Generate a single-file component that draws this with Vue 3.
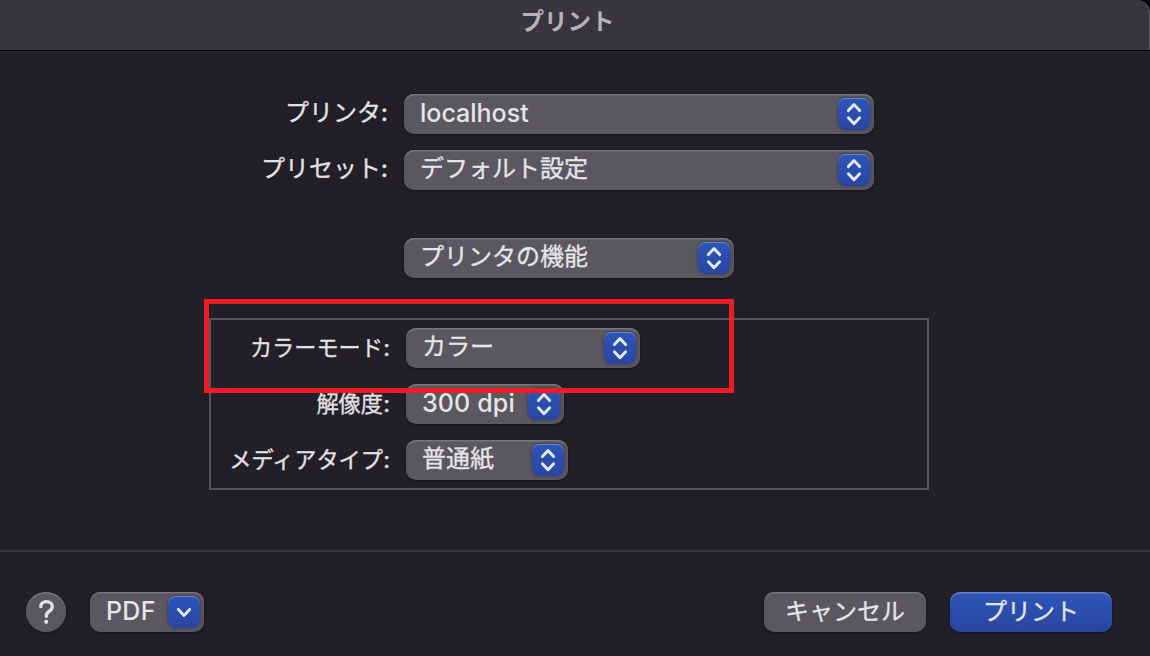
<script setup>
const topRows = [
  { label: 'プリンタ', value: 'localhost', width: 470, latin: 'host' },
  { label: 'プリセット', value: 'デフォルト設定', width: 470 },
  { label: '', value: 'プリンタの機能', width: 330, section: true },
]
const featureRows = [
  { label: 'カラーモード', value: 'カラー', width: 234 },
  { label: '解像度', value: '300 dpi', width: 158, latin: 'dpi' },
  { label: 'メディアタイプ', value: '普通紙', width: 162 },
]
</script>

<template>
  <div class="backdrop">
    <main class="dialog">
      <header class="titlebar"><span>プリント</span></header>
      <section class="content">
        <div v-for="row in topRows" :key="row.value" class="row" :class="{ section: row.section }">
          <div class="label"><template v-if="row.label"><span>{{ row.label }}</span><span class="colon">:</span></template></div>
          <div class="control popup" :style="{ width: row.width + 'px' }">
            <span class="value" :class="row.latin">{{ row.value }}</span>
            <span class="stepper">
              <svg width="32" height="32" viewBox="0 0 32 32"><path d="M10.4 12.6 16 6.6l5.6 6M10.4 19.8l5.6 6 5.6-6" /></svg>
            </span>
          </div>
        </div>
        <div class="group">
          <div v-for="row in featureRows" :key="row.label" class="row small">
            <div class="label"><span>{{ row.label }}</span><span class="colon">:</span></div>
            <div class="control popup" :style="{ width: row.width + 'px' }">
              <span class="value" :class="row.latin">{{ row.value }}</span>
              <span class="stepper">
                <svg width="32" height="32" viewBox="0 0 32 32"><path d="M10.4 12.6 16 6.6l5.6 6M10.4 19.8l5.6 6 5.6-6" /></svg>
              </span>
            </div>
          </div>
          <div class="highlight"></div>
        </div>
      </section>
      <footer class="footer">
        <button class="control help" aria-label="ヘルプ">
          <svg width="40" height="40" viewBox="0 0 40 40"><path d="M14.8 14.6C15 11.2 17.2 9.6 20.4 9.6c3.4 0 5.9 2 5.9 5 0 2.4-1.3 3.6-3.3 4.9-1.9 1.2-2.6 2.3-2.6 4.2v.6" /><circle cx="20.2" cy="29.8" r="2.1" /></svg>
        </button>
        <div class="control popup pdf">
          <span class="value pdftext">PDF</span>
          <span class="stepper">
            <svg width="32" height="32" viewBox="0 0 32 32"><path d="M10.4 13.4 16 19.4l5.6-6" /></svg>
          </span>
        </div>
        <button class="control action cancel"><span>キャンセル</span></button>
        <button class="control action primary"><span>プリント</span></button>
      </footer>
    </main>
  </div>
</template>

<style>
body { margin: 0; overflow: hidden; background: #000; }
</style>

<style scoped>
.backdrop {
  width: 1150px;
  height: 656px;
  background: #08070a;
}
.dialog {
  box-sizing: border-box;
  width: 1150px;
  height: 656px;
  display: flex;
  flex-direction: column;
  overflow: hidden;
  border-top-right-radius: 13px;
  background: #221f29;
  color: #e3e2e4;
  font: 24px/40px Inter, "Noto Sans CJK JP", sans-serif;
  -webkit-text-stroke: 0.3px currentColor;
}
.titlebar {
  box-sizing: border-box;
  flex: none;
  height: 51px;
  border-bottom: 1px solid #000;
  border-top-right-radius: 13px;
  background: #38353f;
  box-shadow: inset -1px 0 0 #65626b;
  color: #b5b2ba;
  text-align: center;
  font-size: 23.5px;
  font-weight: 700;
  line-height: 43px;
  padding-right: 15px;
  -webkit-text-stroke: 0;
}
.content {
  flex: none;
  box-sizing: border-box;
  height: 499px;
  padding-top: 43px;
}
.row {
  display: flex;
  height: 40px;
  margin-bottom: 16px;
}
.row.section { margin: 48px 0 40px; }
.label {
  width: 388px;
  margin-right: 16px;
  display: flex;
  justify-content: flex-end;
  line-height: 38px;
  white-space: nowrap;
}
.colon {
  width: 7px;
  display: flex;
  justify-content: center;
  font-weight: 500;
}
.control {
  box-sizing: border-box;
  height: 40px;
  border: 0;
  border-radius: 10px;
  background: #5a5760;
  box-shadow: inset 0 1.5px 0 #77747c, 0 1px 2px #141218;
  color: #e6e5e8;
}
.popup {
  display: flex;
  justify-content: space-between;
  align-items: flex-start;
  padding: 4px 4px 4px 16px;
}
.value {
  line-height: 40px;
  margin-top: -5px;
  white-space: nowrap;
}
.host, .dpi, .pdftext {
  font-size: 25px;
  font-weight: 500;
  -webkit-text-stroke: 0;
}
.dpi { letter-spacing: 0.15px; }
.pdftext { font-weight: 450; letter-spacing: 0.3px; }
.stepper {
  flex: none;
  width: 32px;
  height: 32px;
  border-radius: 8px;
  background: linear-gradient(#2d55b9, #2846a0);
  box-shadow: inset 0 1px 0 #6582c9, 0 0 3px #34313b;
}
svg { display: block; }
path {
  fill: none;
  stroke: #e3e8f5;
  stroke-width: 2.9;
  stroke-linecap: round;
  stroke-linejoin: round;
}
.group {
  position: relative;
  box-sizing: border-box;
  width: 720px;
  height: 172px;
  margin-left: 209px;
  padding-top: 8px;
  border: 2px solid #56535d;
}
.small .label {
  width: 179px;
  margin-right: 16px;
  font-size: 22.2px;
  line-height: 39px;
}
.highlight {
  position: absolute;
  box-sizing: border-box;
  left: -7px;
  top: -21px;
  width: 530px;
  height: 94px;
  border: 5px solid #ee1c23;
}
.footer {
  box-sizing: border-box;
  flex: 1;
  display: flex;
  border-top: 2px solid #38353f;
  padding: 40px 38px 0 26px;
}
.help {
  width: 40px;
  padding: 0;
  border-radius: 50%;
}
.help path { stroke: #e3e2e4; stroke-width: 3.3; }
.help circle { fill: #e3e2e4; }
.pdf { width: 114px; margin-left: 24px; }
.action {
  width: 162px;
  padding: 0;
  font: 24px/36px "Noto Sans CJK JP", sans-serif;
  -webkit-text-stroke: 0.3px currentColor;
}
.action span { display: block; height: 40px; }
.cancel { margin-left: auto; }
.primary {
  margin-left: 24px;
  background: linear-gradient(#2d55b9, #2846a0);
  box-shadow: inset 0 1.5px 0 #6680c8, 0 1px 2px #141218;
}
</style>
